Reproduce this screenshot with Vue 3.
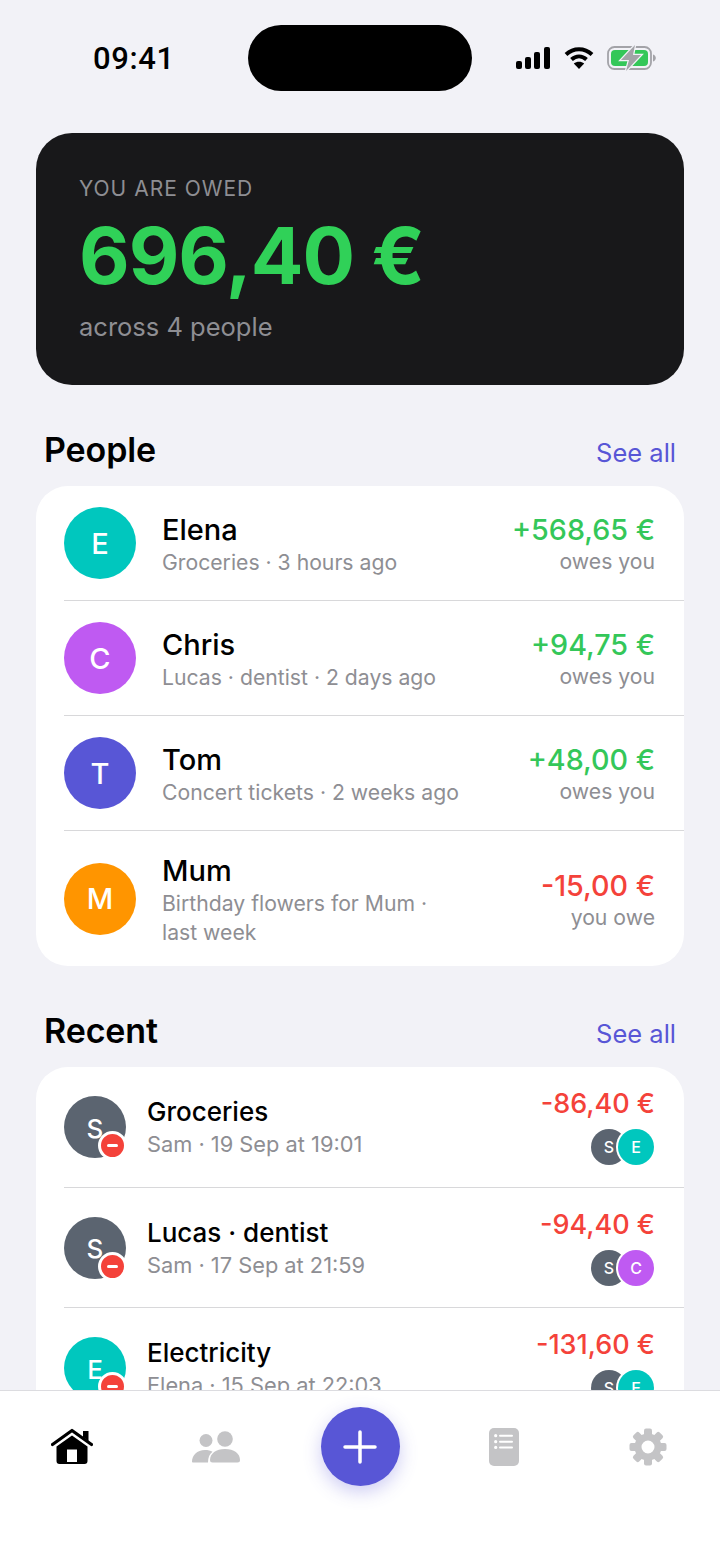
<template>
  <div class="screen">
    <div class="statusbar">
      <span class="time">09:41</span>
      <div class="island"></div>
      <div class="status-icons">
        <svg width="36" height="24" viewBox="0 0 36 24"><rect x="1" y="15" width="6" height="8" rx="2"/><rect x="10" y="11" width="6" height="12" rx="2"/><rect x="19" y="6" width="6" height="17" rx="2"/><rect x="29" y="1" width="6" height="22" rx="2"/></svg>
        <svg width="30" height="24" viewBox="0 0 30 24"><path d="M2 8.500C9.500 1.500 20.500 1.500 28 8.500" fill="none" stroke="#000" stroke-width="4"/><path d="M7.500 13.500C12 9.500 18 9.500 22.500 13.500" fill="none" stroke="#000" stroke-width="4"/><path d="M15 23l-5.200-5.500c3-2.400 7.400-2.400 10.400 0z"/></svg>
        <svg width="50" height="26" viewBox="0 0 50 26"><rect x="1" y="2" width="43" height="22" rx="6.500" fill="none" stroke="#a3a3a8" stroke-width="1.800"/><rect x="4" y="5" width="37" height="16" rx="4" fill="#34c759"/><path d="M46 9.500c2 .6 2.800 2 2.800 3.500s-.8 2.900-2.800 3.500z" fill="#a3a3a8"/><path d="M28 0L14 15h8l-3 11 15-16h-8z" fill="#a3a3a8" stroke="#f2f2f7" stroke-width="2.500" paint-order="stroke"/></svg>
      </div>
    </div>

    <section class="hero">
      <div class="hero-label">YOU ARE OWED</div>
      <div class="hero-amount">696,40 €</div>
      <div class="hero-sub">across 4 people</div>
    </section>

    <div class="section-head people-head">
      <h2>People</h2>
      <span class="see-all">See all</span>
    </div>
    <div class="card">
      <div v-for="p in people" :key="p.name" class="row person">
        <div class="avatar" :style="{ background: p.color }">{{ p.name[0] }}</div>
        <div class="info">
          <div class="name">{{ p.name }}</div>
          <div class="sub">{{ p.sub }}</div>
        </div>
        <div class="right">
          <div class="amount" :class="p.amount[0] === '+' ? 'pos' : 'neg'">{{ p.amount }}</div>
          <div class="sub">{{ p.note }}</div>
        </div>
      </div>
    </div>

    <div class="section-head recent-head">
      <h2>Recent</h2>
      <span class="see-all">See all</span>
    </div>
    <div class="card">
      <div v-for="r in recent" :key="r.title" class="row expense">
        <div class="avatar small" :style="{ background: r.color }">
          <span class="letter">{{ r.letter }}</span>
          <span class="minus"><i></i></span>
        </div>
        <div class="info">
          <div class="title">{{ r.title }}</div>
          <div class="sub">{{ r.sub }}</div>
        </div>
        <div class="right">
          <div class="amount neg">{{ r.amount }}</div>
          <div class="pair">
            <span class="mini" style="background: #5b6470">S</span>
            <span class="mini over" :style="{ background: r.other }">{{ r.otherLetter }}</span>
          </div>
        </div>
      </div>
    </div>

    <nav class="tabbar">
      <svg width="42" height="38" viewBox="0 0 42 38">
        <path d="M1.500 16.500L21 2.500l19.500 14" fill="none" stroke="#000" stroke-width="3.200" stroke-linecap="round" stroke-linejoin="round"/>
        <path d="M32 3h5.500v10L32 9z"/>
        <path fill-rule="evenodd" d="M21 7.500L36.500 18.500V33a3 3 0 0 1-3 3H8.500a3 3 0 0 1-3-3V18.500zM16 21.500V34h10V21.500z"/>
      </svg>
      <svg width="48" height="34" viewBox="0 0 48 34" fill="#c4c4c6">
        <circle cx="14" cy="10.500" r="6.500"/>
        <path d="M0 32c0-7 5-12 13-12 3 0 5.500.6 7.500 1.800C17.500 24 16 27.500 16 32.500H2a2 2 0 0 1-2-.5z"/>
        <circle cx="33" cy="9" r="7.800"/>
        <path d="M18 30c0-6.500 6-11 15-11s15 4.500 15 11a2.500 2.500 0 0 1-2.500 2.500h-25A2.500 2.500 0 0 1 18 30z"/>
      </svg>
      <button class="fab">
        <svg width="34" height="34" viewBox="0 0 34 34"><path d="M17 2v30M2 17h30" stroke="#fff" stroke-width="3.500" stroke-linecap="round"/></svg>
      </button>
      <svg width="30" height="38" viewBox="0 0 30 38">
        <rect width="30" height="38" rx="5" fill="#c4c4c6"/>
        <g fill="#fff"><circle cx="6.700" cy="7.700" r="1.600"/><circle cx="6.700" cy="13.700" r="1.600"/><circle cx="6.700" cy="19.400" r="1.600"/><rect x="10" y="6.700" width="14" height="2" rx="1"/><rect x="10" y="12.700" width="14" height="2" rx="1"/><rect x="10" y="18.400" width="14" height="2" rx="1"/></g>
      </svg>
      <svg width="38" height="38" viewBox="0 0 38 38">
        <circle cx="19" cy="19" r="10" fill="none" stroke="#c4c4c6" stroke-width="7"/>
        <rect v-for="a in gearTeeth" :key="a" x="15" y="0.500" width="8" height="9" rx="2" fill="#c4c4c6" :transform="`rotate(${a} 19 19)`"/>
      </svg>
    </nav>
  </div>
</template>

<script setup>
const people = [
  { name: 'Elena', sub: 'Groceries · 3 hours ago', amount: '+568,65 €', note: 'owes you', color: '#00c7be' },
  { name: 'Chris', sub: 'Lucas · dentist · 2 days ago', amount: '+94,75 €', note: 'owes you', color: '#bf5af2' },
  { name: 'Tom', sub: 'Concert tickets · 2 weeks ago', amount: '+48,00 €', note: 'owes you', color: '#5856d6' },
  { name: 'Mum', sub: 'Birthday flowers for Mum · last week', amount: '-15,00 €', note: 'you owe', color: '#ff9500' }
]

const recent = [
  { title: 'Groceries', sub: 'Sam · 19 Sep at 19:01', amount: '-86,40 €', letter: 'S', color: '#5b6470', other: '#00c7be', otherLetter: 'E' },
  { title: 'Lucas · dentist', sub: 'Sam · 17 Sep at 21:59', amount: '-94,40 €', letter: 'S', color: '#5b6470', other: '#bf5af2', otherLetter: 'C' },
  { title: 'Electricity', sub: 'Elena · 15 Sep at 22:03', amount: '-131,60 €', letter: 'E', color: '#00c7be', other: '#00c7be', otherLetter: 'E' }
]

const gearTeeth = [0, 45, 90, 135, 180, 225, 270, 315]
</script>

<style>
html, body {
  margin: 0;
  background: #f2f2f7;
}
</style>

<style scoped>
.screen {
  position: relative;
  width: 720px;
  height: 1565px;
  overflow: hidden;
  background: #f2f2f7;
  font-family: Inter, "Liberation Sans", sans-serif;
  color: #000;
}

.statusbar {
  display: flex;
  align-items: center;
  height: 66px;
  margin-top: 25px;
  padding: 0 62px 0 93px;
}
.time {
  width: 155px;
  font-size: 31px;
  font-weight: 500;
  font-family: Roboto, sans-serif;
  letter-spacing: 0.6px;
}
.island {
  width: 224px;
  height: 66px;
  border-radius: 33px;
  background: #000;
}
.status-icons {
  display: flex;
  align-items: center;
  gap: 13px;
  margin-left: 43px;
}

.hero {
  box-sizing: border-box;
  height: 252px;
  margin: 42px 36px 0;
  padding: 44px 43px 0;
  border-radius: 36px;
  background: #18181a;
}
.hero-label {
  font-size: 21px;
  line-height: 24px;
  letter-spacing: 1px;
  color: #8e8e93;
}
.hero-amount {
  margin-top: 12px;
  font-size: 78px;
  line-height: 86px;
  font-weight: 700;
  color: #30d158;
  letter-spacing: -1px;
}
.hero-sub {
  margin-top: 13px;
  font-size: 25.500px;
  line-height: 30px;
  color: #8e8e93;
}

.section-head {
  display: flex;
  align-items: center;
  justify-content: space-between;
  box-sizing: border-box;
  height: 40px;
  padding: 0 44px 2px;
}
.people-head { margin-top: 45px; margin-bottom: 16px; }
.recent-head { margin-top: 45px; margin-bottom: 16px; }
h2 {
  margin: 0;
  font-size: 34px;
  font-weight: 600;
  letter-spacing: -0.100px;
}
.see-all {
  position: relative;
  top: 3px;
  font-size: 25.500px;
  color: #5856d6;
}

.card {
  margin: 0 36px;
  padding-left: 28px;
  border-radius: 32px;
  background: #fff;
}
.row {
  display: flex;
  align-items: center;
  box-sizing: border-box;
  border-bottom: 1px solid #d8d8da;
  padding-right: 29px;
}
.row:last-child {
  border-bottom: none;
}
.person {
  height: 115px;
}
.person:last-child {
  height: 135px;
}
.expense {
  height: 120px;
}
.expense:first-child {
  height: 121px;
}

.avatar {
  flex: none;
  display: flex;
  align-items: center;
  justify-content: center;
  width: 72px;
  height: 72px;
  border-radius: 50%;
  color: #fff;
  font-size: 29px;
  font-weight: 500;
}
.avatar.small {
  position: relative;
  width: 62px;
  height: 62px;
  font-size: 26px;
}
.letter {
  position: relative;
  top: 1px;
}
.minus {
  position: absolute;
  right: -1px;
  bottom: -2px;
  display: flex;
  align-items: center;
  justify-content: center;
  width: 23px;
  height: 23px;
  border: 3px solid #fff;
  border-radius: 50%;
  background: #f4423a;
}
.minus i {
  width: 11px;
  height: 3px;
  border-radius: 2px;
  background: #fff;
}

.info {
  flex: 1;
  min-width: 0;
  margin-left: 26px;
  padding-top: 2px;
}
.expense .info {
  margin-left: 21px;
  padding-top: 0;
}
.person .info {
  max-width: 302px;
}
.name {
  font-size: 29px;
  line-height: 36px;
  font-weight: 500;
}
.title {
  margin-bottom: 2px;
  font-size: 26px;
  line-height: 33px;
  font-weight: 500;
}
.sub {
  font-size: 21.200px;
  line-height: 29px;
  color: #8e8e93;
}
.expense .sub {
  font-size: 21.800px;
}
.right {
  margin-left: auto;
  text-align: right;
}
.person .right {
  padding-top: 3px;
}
.expense .right {
  padding-bottom: 2px;
}
.amount {
  font-size: 27px;
  line-height: 34px;
  font-weight: 500;
  white-space: nowrap;
}
.person .amount {
  font-size: 28.700px;
}
.pos { color: #34c759; }
.neg { color: #f4423a; }
.pair {
  display: flex;
  justify-content: flex-end;
  margin: 8px 1px 0 0;
}
.mini {
  display: flex;
  align-items: center;
  justify-content: center;
  width: 36px;
  height: 36px;
  border-radius: 50%;
  color: #fff;
  font-size: 16px;
  font-weight: 500;
}
.mini.over {
  margin-left: -9px;
  box-shadow: 0 0 0 2px #fff;
}

.tabbar {
  position: absolute;
  left: 0;
  right: 0;
  bottom: 0;
  box-sizing: border-box;
  height: 175px;
  padding-top: 16px;
  display: grid;
  grid-template-columns: repeat(5, 1fr);
  align-content: start;
  align-items: center;
  justify-items: center;
  border-top: 1px solid #dcdce0;
  background: #fff;
}
.fab {
  display: flex;
  align-items: center;
  justify-content: center;
  width: 79px;
  height: 79px;
  padding: 0;
  border: none;
  border-radius: 50%;
  background: #5856d6;
  box-shadow: 0 6px 18px rgba(88, 86, 214, 0.3);
}
</style>
